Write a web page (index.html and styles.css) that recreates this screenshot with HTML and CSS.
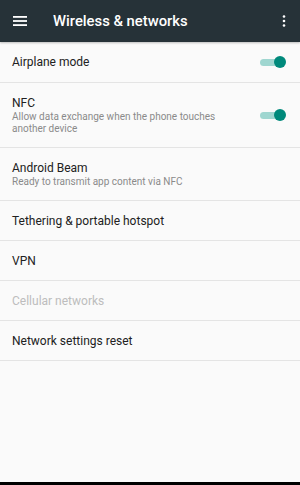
FILE: index.html
```html
<!DOCTYPE html>
<html lang="en">
<head>
    <meta charset="UTF-8">
    <meta name="viewport" content="width=device-width, initial-scale=1.0">
    <title>Wireless &amp; networks</title>
    <link rel="stylesheet" href="styles.css">
</head>
<body>
    <div class="screen">
        <!-- Barre du haut -->
        <header class="appbar">
            <svg class="appbar-icon" width="14" height="10" viewBox="0 0 14 10">
                <rect x="0" y="0" width="14" height="1.8" fill="#fff"/>
                <rect x="0" y="4.1" width="14" height="1.8" fill="#fff"/>
                <rect x="0" y="8.2" width="14" height="1.8" fill="#fff"/>
            </svg>
            <div class="appbar-title">Wireless &amp; networks</div>
            <svg class="appbar-more" width="4" height="12" viewBox="0 0 4 12">
                <circle cx="2" cy="1.5" r="1.3" fill="#fff"/>
                <circle cx="2" cy="6" r="1.3" fill="#fff"/>
                <circle cx="2" cy="10.5" r="1.3" fill="#fff"/>
            </svg>
        </header>

        <!-- Liste des réglages -->
        <div class="list">
            <div class="row row-airplane">
                <div class="row-text">
                    <div class="row-title">Airplane mode</div>
                </div>
                <div class="switch"><span class="switch-track"></span><span class="switch-thumb"></span></div>
            </div>
            <div class="row row-nfc">
                <div class="row-text">
                    <div class="row-title">NFC</div>
                    <div class="row-sub">Allow data exchange when the phone touches another device</div>
                </div>
                <div class="switch"><span class="switch-track"></span><span class="switch-thumb"></span></div>
            </div>
            <div class="row row-beam">
                <div class="row-text">
                    <div class="row-title">Android Beam</div>
                    <div class="row-sub">Ready to transmit app content via NFC</div>
                </div>
            </div>
            <div class="row">
                <div class="row-text"><div class="row-title">Tethering &amp; portable hotspot</div></div>
            </div>
            <div class="row">
                <div class="row-text"><div class="row-title">VPN</div></div>
            </div>
            <div class="row">
                <div class="row-text"><div class="row-title disabled">Cellular networks</div></div>
            </div>
            <div class="row">
                <div class="row-text"><div class="row-title">Network settings reset</div></div>
            </div>
        </div>

        <div class="navbar"></div>
    </div>
</body>
</html>
```

FILE: styles.css
```css
* {
    box-sizing: border-box;
}

body {
    margin: 0;
    font-family: Roboto, "Noto Sans", Arial, sans-serif;
    background-color: #fafafa;
}

.screen {
    height: 100vh;
    display: flex;
    flex-direction: column;
}

.appbar {
    height: 42px;
    flex-shrink: 0;
    background-color: #263238;
    display: flex;
    align-items: center;
    padding: 0 14px 0 13px;
    box-shadow: 0 1px 2px rgba(0, 0, 0, 0.25);
    position: relative;
    z-index: 1;
}

.appbar-icon {
    flex-shrink: 0;
}

.appbar-title {
    flex: 1;
    margin-left: 26px;
    color: #fff;
    font-size: 14.8px;
    font-weight: 500;
}

.appbar-more {
    flex-shrink: 0;
}

.list {
    flex: 1;
}

.row {
    display: flex;
    align-items: center;
    height: 40px;
    padding: 0 12px;
    border-bottom: 1px solid #e4e4e4;
}

.row-airplane {
    height: 41px;
}

.row-nfc {
    height: 65px;
    align-items: flex-start;
}

.row-nfc .row-text {
    padding-top: 13px;
}

.row-nfc .switch {
    margin-top: 26px;
}

.row-beam {
    height: 53px;
}

.row-text {
    flex: 1;
    min-width: 0;
}

.row-title {
    font-size: 12px;
    color: #212121;
    line-height: 14px;
}

.row-title.disabled {
    color: #bdbdbd;
}

.row-sub {
    font-size: 10px;
    color: #8a8a8a;
    line-height: 11.6px;
    margin-top: 1px;
    padding-right: 20px;
}

.switch {
    position: relative;
    width: 26px;
    height: 12px;
    flex-shrink: 0;
    margin-right: 2px;
}

.switch-track {
    position: absolute;
    left: 0;
    top: 2.5px;
    width: 24px;
    height: 7px;
    border-radius: 4px;
    background-color: #9fd6d0;
}

.switch-thumb {
    position: absolute;
    right: 0;
    top: 0;
    width: 12px;
    height: 12px;
    border-radius: 50%;
    background-color: #00897b;
}

.navbar {
    height: 3px;
    flex-shrink: 0;
    background-color: #000;
}
```
